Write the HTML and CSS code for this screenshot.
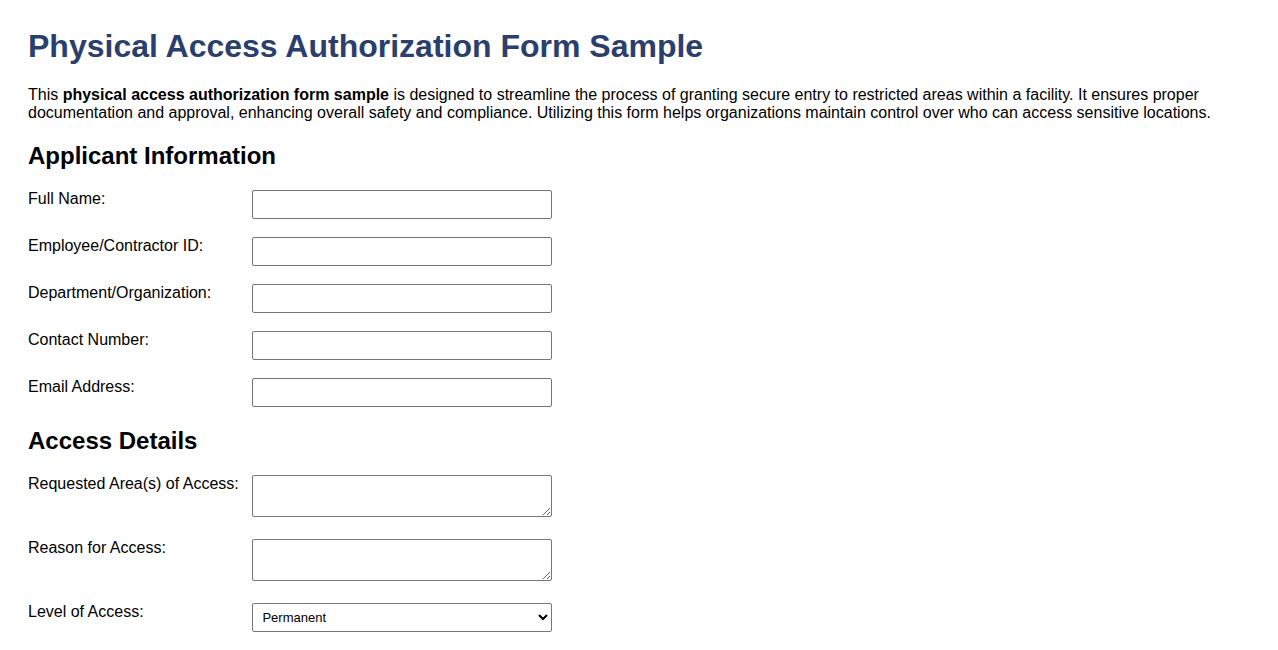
FILE: index.html
```html
<!DOCTYPE html>
<html lang="en">
<head>
    <meta charset="UTF-8">
    <meta name="viewport" content="width=device-width, initial-scale=1.0">
    <title>Physical Access Authorization Form Sample</title>
    <link rel="stylesheet" href="styles.css">
</head>
<body>
    <h1>Physical Access Authorization Form Sample</h1>
    <p>This <strong>physical access authorization form sample</strong> is designed to streamline the process of granting secure entry to restricted areas within a facility. It ensures proper documentation and approval, enhancing overall safety and compliance. Utilizing this form helps organizations maintain control over who can access sensitive locations.</p>

    <form>
        <h2>Applicant Information</h2>
        <div class="form-group">
            <label for="fullName">Full Name:</label>
            <input type="text" id="fullName">
        </div>
        <div class="form-group">
            <label for="employeeId">Employee/Contractor ID:</label>
            <input type="text" id="employeeId">
        </div>
        <div class="form-group">
            <label for="department">Department/Organization:</label>
            <input type="text" id="department">
        </div>
        <div class="form-group">
            <label for="contact">Contact Number:</label>
            <input type="text" id="contact">
        </div>
        <div class="form-group">
            <label for="email">Email Address:</label>
            <input type="email" id="email">
        </div>

        <h2>Access Details</h2>
        <div class="form-group">
            <label for="areas">Requested Area(s) of Access:</label>
            <textarea id="areas"></textarea>
        </div>
        <div class="form-group">
            <label for="reason">Reason for Access:</label>
            <textarea id="reason"></textarea>
        </div>
        <div class="form-group">
            <label for="level">Level of Access:</label>
            <select id="level">
                <option>Permanent</option>
                <option>Temporary</option>
                <option>Escorted</option>
            </select>
        </div>
    </form>
</body>
</html>
```

FILE: styles.css
```css
body {
    font-family: "Liberation Sans", Arial, sans-serif;
    font-size: 16px;
    color: #000;
    background-color: #fff;
    padding: 20px;
}
h1 {
    color: #2b3f6e;
    font-size: 32px;
    margin-top: 0;
    margin-bottom: 21px;
}
h2 {
    font-size: 24px;
    margin: 20px 0;
}
p {
    margin: 0 0 16px;
}
.form-group {
    margin-bottom: 18px;
}
label {
    display: inline-block;
    width: 220px;
    vertical-align: top;
}
input,
textarea,
select {
    box-sizing: border-box;
    width: 300px;
    font-family: "Liberation Sans", Arial, sans-serif;
    font-size: 13px;
    border: 1px solid #767676;
    border-radius: 2px;
}
input {
    height: 29px;
    padding: 6px;
}
textarea {
    height: 42px;
    padding: 6px;
}
select {
    height: 29px;
    padding: 4px 5px;
    background-color: #fff;
    color: #000;
}
```
